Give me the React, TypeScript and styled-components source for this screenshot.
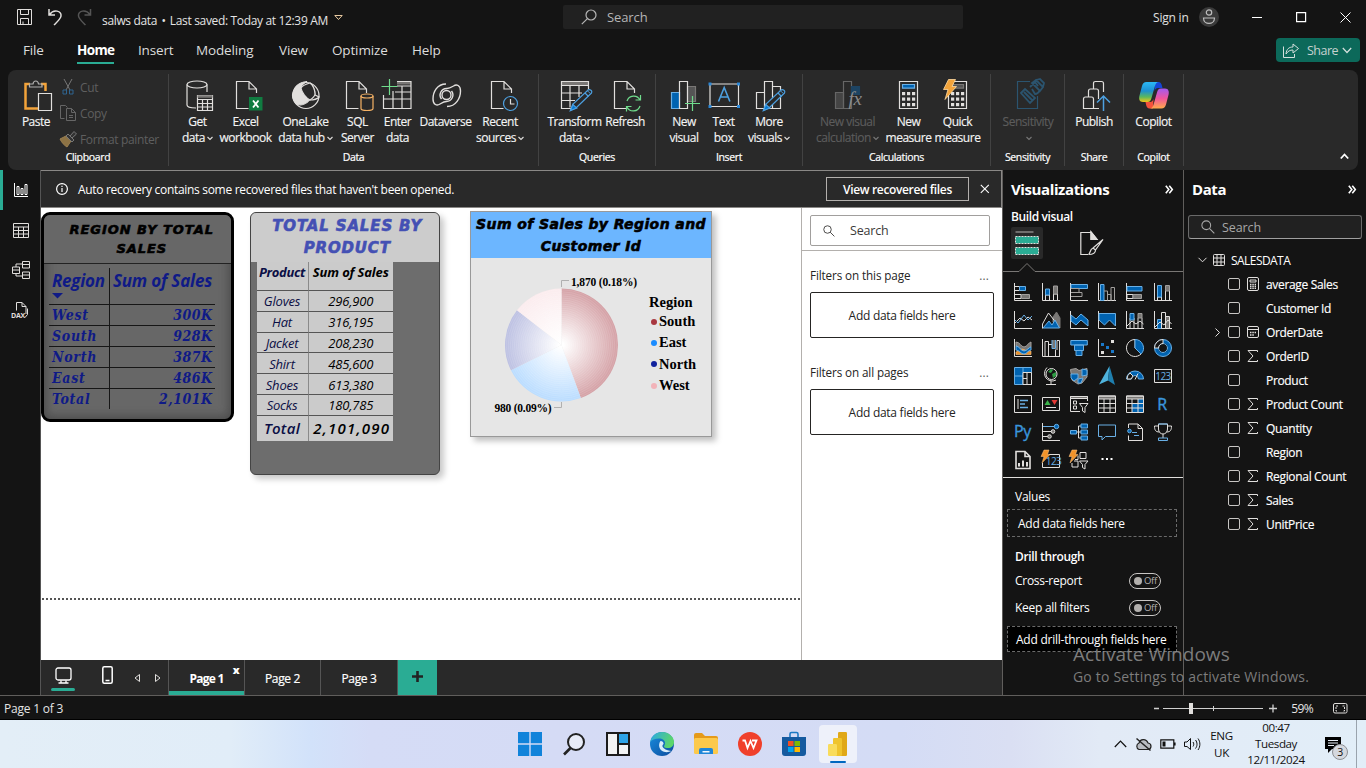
import React from "react";
import styled, { createGlobalStyle, css } from "styled-components";

const UI = `"Open Sans", "Noto Sans", sans-serif`;
const W = "#e1dfdd";
const B = "#0063b1";
const L = "#69afe5";
const G = "#797775";

const Global = createGlobalStyle`
  * { box-sizing: border-box; }
  body { margin: 0; background: #141414; overflow: hidden; font-family: ${UI}; font-size: 12px; letter-spacing: -0.35px; color: #fff; }
  svg { display: block; flex: none; overflow: visible; }
`;

const App_ = styled.div`
  width: 1366px; height: 768px; display: flex; flex-direction: column; background: #141414; position: relative; overflow: hidden;
`;

/* ---------- title bar ---------- */
const TitleBar = styled.header`
  height: 36px; display: flex; align-items: center; padding: 0 0 2px 16px; flex: none;
`;
const QuickIcons = styled.div`display: flex; gap: 13px; width: 86px;`;
const FileTitle = styled.div`
  display: flex; align-items: center; gap: 1.5px; width: 461px; color: #e4e4e4; padding-top: 6px; white-space: pre; letter-spacing: -0.34px;
  svg { margin: -4px 0 0 2px; }
`;
const TopSearch = styled.div`
  width: 400px; height: 24px; background: #212121; border-radius: 2px; display: flex; align-items: center; gap: 10px; padding-left: 18px; color: #b5b5b5; font-size: 13px; letter-spacing: -0.1px;
`;
const SignIn = styled.div`display: flex; align-items: center; gap: 10px; margin-left: 190px; font-size: 12px; color: #e0e0e0; letter-spacing: -0.2px;`;
const WindowButtons = styled.div`display: flex; align-items: center; gap: 33px; margin-left: 33px; padding-top: 1px;`;

/* ---------- menu ---------- */
const MenuBar = styled.nav`height: 34px; display: flex; flex: none; align-items: flex-start; padding-left: 23px;`;
const MenuItem = styled.a<{ $w: number; $on?: boolean }>`
  width: ${(p) => p.$w}px; font-size: 13.5px; line-height: 29px; color: ${(p) => (p.$on ? "#fff" : "#dcdcdc")};
  font-weight: ${(p) => (p.$on ? 700 : 400)}; letter-spacing: ${(p) => (p.$on ? -0.65 : -0.15)}px; display: flex;
  span { border-bottom: 2px solid ${(p) => (p.$on ? "#2aac94" : "transparent")}; height: 28px; }
`;
const ShareButton = styled.button`
  margin-left: auto; margin-top: 2px; margin-right: 6px; width: 84px; height: 24px; border: 0; border-radius: 4px; background: #0c695a;
  color: #c6d2cf; font: 12.5px ${UI}; letter-spacing: -0.5px; display: flex; align-items: center; padding: 0 0 0 7px; gap: 8px;
  svg + span + svg { margin-left: -4px; }
`;

/* ---------- ribbon ---------- */
const Ribbon = styled.section`
  height: 100px; margin: 0 8px; background: #292929; border-radius: 8px; display: flex; flex: none; padding: 4px 0 4px; 
`;
const Group = styled.div<{ $w: number; $pad?: number }>`
  width: ${(p) => p.$w}px; height: 92px; border-right: 1px solid #424242; display: flex; flex-direction: column;
  > div:first-child { padding-left: ${(p) => p.$pad ?? 0}px; }
`;
const GroupBody = styled.div`display: flex; height: 74px;`;
const GroupName = styled.div`text-align: center; font-size: 10.5px; line-height: 18px; color: #fff; letter-spacing: -0.35px; -webkit-text-stroke: 0.2px #fff;`;
const Tool = styled.div<{ $w: number; $off?: boolean }>`
  width: ${(p) => p.$w}px; flex: none; display: flex; flex-direction: column; align-items: center; padding-top: 5px; white-space: nowrap;
  color: ${(p) => (p.$off ? "#5c5c5c" : "#f4f4f4")}; 
  p { margin: 3px 0 0; line-height: 16px; text-align: center; font-size: 12px; letter-spacing: -0.48px; -webkit-text-stroke: 0.15px currentColor; }
  p svg { display: inline-block; margin-left: 2px; vertical-align: 1px; }
`;
const ClipList = styled.div`
  display: flex; flex-direction: column; color: #5f5f5f; font-size: 12px; padding-left: 2px;
  div { display: flex; align-items: center; height: 26px; flex: none; gap: 3px; }
`;
const RibbonEnd = styled.div`flex: 1; display: flex; align-items: flex-end; justify-content: flex-end; padding: 0 9px 6px 0;`;

/* ---------- body ---------- */
const Body = styled.main`height: 525px; display: flex; flex: none;`;
const Rail = styled.aside`width: 41px; border-right: 1px solid #555; display: flex; flex-direction: column;`;
const RailItem = styled.div<{ $on?: boolean }>`
  height: 40px; display: flex; align-items: center; justify-content: center; padding-right: 2px;
  border-left: 3px solid ${(p) => (p.$on ? "#2aac94" : "transparent")};
`;
const Center = styled.section`width: 961px; display: flex; flex-direction: column;`;
const InfoBar = styled.div`
  height: 38px; background: #292929; border: 1px solid #8a8886; border-left: 0; display: flex; align-items: center; padding: 0 11px 0 15px;
  span { margin-left: 10px; font-size: 12px; letter-spacing: -0.31px; }
`;
const InfoButton = styled.button`
  margin-left: auto; width: 143px; height: 24px; background: transparent; border: 1px solid #b3b0ad; color: #fff; font: 600 12px ${UI}; letter-spacing: -0.35px; margin-right: 11px; padding: 0;
`;
const Work = styled.div`height: 452px; display: flex; background: #fff;`;
const Canvas = styled.div`
  width: 760px; position: relative; overflow: hidden;
`;
const PageEdge = styled.div`position: absolute; left: 1px; right: 0; top: 390px; height: 2px; background: repeating-linear-gradient(90deg, #555 0 2px, #fff 2px 4px);`;

const Filters = styled.aside`width: 201px; border-left: 1px solid #b3b0ad; color: #252423; display: flex; flex-direction: column;`;
const FilterSearchRow = styled.div`height: 43px; border-bottom: 1px solid #b3b0ad; padding: 7px 0 0 8px;`;
const FilterSearch = styled.div`
  width: 180px; height: 31px; border: 1px solid #a19f9d; border-radius: 2px; display: flex; align-items: center; padding-left: 12px; gap: 15px; font-size: 12.5px; color: #3b3a39; letter-spacing: -0.2px;
  svg { width: 12px; height: 12px; }
`;
const FilterHead = styled.div`display: flex; justify-content: space-between; padding: 0 13px 0 8px; height: 17px; line-height: 17px; font-size: 11.7px; margin-top: 16px; letter-spacing: -0.12px;`;
const Dots = styled.span`letter-spacing: 0.2px; color: #605e5c;`;
const DropBox = styled.div`
  margin: 8px 0 10px 8px; width: 184px; height: 46px; border: 1px solid #252423; border-radius: 2px; display: flex; align-items: center; justify-content: center; font-size: 12px; letter-spacing: -0.27px;
`;

/* ---------- page tabs ---------- */
const Tabs = styled.div`height: 35px; background: #292929; display: flex;`;
const ViewButton = styled.div<{ $on?: boolean }>`
  width: 44px; display: flex; flex-direction: column; align-items: center; padding-top: 7px; gap: 4px;
  &::after { content: ""; width: 24px; height: 3px; border-radius: 2px; background: ${(p) => (p.$on ? "#2aac94" : "transparent")}; }
  & + & { padding-top: 6px; }
`;
const Arrows = styled.div`width: 39px; display: flex; gap: 15px; padding: 13px 0 0 5px;`;
const Tab = styled.div<{ $on?: boolean; $w?: number }>`
  width: ${(p) => p.$w ?? 76}px; border-left: 1px solid #555; text-align: center; line-height: 38px; height: 35px; font-size: 12px; position: relative; 
  font-weight: ${(p) => (p.$on ? 700 : 400)}; -webkit-text-stroke: ${(p) => (p.$on ? 0 : 0.2)}px #fff;
  ${(p) => p.$on && css`box-shadow: inset 0 -4px #2aac94; letter-spacing: -0.75px;`}
`;
const TabClose = styled.b`position: absolute; right: 5px; top: 0; line-height: 19px; font-size: 11px;`;
const AddTab = styled.div`width: 40px; background: #2aac94; border-left: 1px solid #555; display: flex; align-items: center; justify-content: center; padding-bottom: 2px;`;

/* ---------- visualizations pane ---------- */
const VizPane = styled.aside`width: 182px; border-left: 1px solid #605e5c; border-right: 1px solid #605e5c; display: flex; flex-direction: column;`;
const PaneTitle = styled.div`
  height: 38px; display: flex; align-items: center; justify-content: space-between; padding: 0 10px 0 8px; font-size: 15px; font-weight: 700; letter-spacing: -0.4px;
`;
const BuildLabel = styled.div`height: 19px; padding-left: 8px; line-height: 17px; font-weight: 600; font-size: 12px; letter-spacing: -0.38px;`;
const BuildTabs = styled.div`
  display: flex; height: 32px; padding-left: 8px; gap: 33px;
  div { width: 32px; display: flex; align-items: center; justify-content: center; border-radius: 2px; }
  div:first-child { background: #292929; }
`;
const IconGrid = styled.div`
  display: grid; grid-template-columns: repeat(6, 28px); grid-auto-rows: 28px; padding: 6px 0 0 6px; place-items: center; height: 206px; border-bottom: 1px solid #e1dfdd; margin-top: 1px;
`;
const Notch = styled.div`height: 12px;`;
const WellLabel = styled.div<{ $h: number; $b?: boolean; $drop?: number }>`
  height: ${(p) => p.$h}px; padding: ${(p) => p.$drop ?? 0}px 22px 0 12px; font-size: 12px; font-weight: ${(p) => (p.$b ? 600 : 400)};
  display: flex; align-items: center; justify-content: space-between; letter-spacing: ${(p) => (p.$b ? -0.35 : -0.27)}px;
`;
const Well = styled.div<{ $dark?: boolean; $h: number }>`
  margin: 0 6px 0 4px; height: ${(p) => p.$h}px; border: 1px dashed #6a6a6a; padding-left: ${(p) => (p.$dark ? 8 : 10)}px; display: flex; align-items: center;
  background: ${(p) => (p.$dark ? "#000" : "transparent")}; white-space: nowrap; font-size: 12px; letter-spacing: ${(p) => (p.$dark ? -0.24 : -0.27)}px;
`;
const Toggle = styled.span`
  width: 32px; height: 16px; border: 1px solid #c8c6c4; border-radius: 8px; display: flex; align-items: center; gap: 2px; padding-left: 4px; font-size: 9.5px; color: #b3b0ad; line-height: 14px;
  &::before { content: ""; width: 8px; height: 8px; border-radius: 50%; background: #b3b0ad; }
`;

/* ---------- data pane ---------- */
const DataPane = styled.aside`width: 182px; display: flex; flex-direction: column;`;
const DataSearch = styled.div`
  margin: 7px 4px 9px 4px; height: 24px; border: 1px solid #6a6a6a; border-bottom-color: #a0a0a0; border-radius: 3px; background: #212121; display: flex; align-items: center; padding-left: 12px; gap: 7px; color: #a8a8a8; font-size: 12.5px; letter-spacing: -0.1px;
`;
const TableRow = styled.div`height: 24px; display: flex; align-items: center; padding-left: 14px; gap: 6px; letter-spacing: -0.55px;`;
const FieldRow = styled.div`
  height: 24px; display: flex; align-items: center; font-size: 12px; letter-spacing: -0.33px; -webkit-text-stroke: 0.15px #fff;
  i { width: 44px; display: flex; justify-content: flex-end; padding-right: 8px; }
  em { width: 12px; height: 12px; border: 1px solid #c8c6c4; border-radius: 2px; }
  u { width: 26px; display: flex; justify-content: center; text-decoration: none; }
`;

/* ---------- status bar ---------- */
const Status = styled.footer`
  height: 25px; flex: none; border-top: 1px solid #605e5c; border-bottom: 1px solid #000; display: flex; align-items: center; padding: 1px 18px 0 4px; font-size: 12px; color: #e4e4e4; letter-spacing: -0.2px;
  svg:first-of-type { margin: -1px 0 0 auto; }
  b { font-weight: 400; margin: 0 20px 0 14px; letter-spacing: -0.6px; }
`;

/* ---------- task bar ---------- */
const TaskBar = styled.footer`
  height: 48px; flex: none; display: flex; background: linear-gradient(90deg, #e3eef7 0, #e1edf8 230px, #d2e2fa 310px, #d5dcf6 370px, #d5dbf5 560px, #d4dcf5 900px, #dadff3 1010px, #e2eaf6 1100px, #e2eef8 100%);
  color: #111; 
`;
const Apps = styled.div`display: flex; margin-left: 507.5px; width: 352px; align-items: center;`;
const AppSlot = styled.div<{ $on?: boolean }>`
  width: 44px; height: 48px; display: flex; align-items: center; justify-content: center; position: relative;
  > div { width: 38px; height: 38px; display: flex; align-items: center; justify-content: center; border-radius: 4px; background: ${(p) => (p.$on ? "#eef1fa" : "transparent")}; }
  &::after { content: ""; position: absolute; bottom: 5px; width: 16px; height: 2.5px; border-radius: 2px; background: ${(p) => (p.$on ? "#0067c0" : "transparent")}; }
`;
const Tray = styled.div`margin-left: 254px; display: flex; align-items: center; gap: 8px;`;
const TrayText = styled.div<{ $w: number; $lh: number }>`
  width: ${(p) => p.$w}px; text-align: center; line-height: ${(p) => p.$lh}px; font-size: 11.6px; letter-spacing: -0.4px; align-self: center;
`;
const Notice = styled.div`position: relative; align-self: center; width: 28px; margin: 1px 0 0 12.5px; padding-left: 3px;`;
const Badge = styled.span`
  position: absolute; left: 10px; top: 7px; width: 16px; height: 16px; border-radius: 50%; background: #d5d8de; border: 1px solid #8d8f94; font-size: 10.5px; line-height: 14px; text-align: center;
`;
const ShowDesktop = styled.div`margin-left: 6px; width: 5px; height: 48px; border-left: 1px solid #9aa3ad; align-self: flex-start;`;
const Watermark = styled.div`
  position: absolute; left: 1073px; top: 642px; color: rgba(160, 160, 160, 0.75); font-size: 19px; line-height: 24px; letter-spacing: 0.05px; pointer-events: none; white-space: nowrap;
  small { display: block; font-size: 14px; line-height: 21px; letter-spacing: 0.19px; }
`;

/* ---------- report visuals ---------- */
const Visual = styled.article<{ $x: number; $y: number; $w: number; $h: number }>`
  position: absolute; left: ${(p) => p.$x}px; top: ${(p) => p.$y}px; width: ${(p) => p.$w}px; height: ${(p) => p.$h}px; overflow: hidden;
`;
const RegionCard = styled(Visual)`
  border: 3px solid #000; border-radius: 9px; background: #676767; box-shadow: inset 0 0 9px 3px #4d4d4d;
`;
const CardTitle = styled.h3<{ $size: number; $lh: number; $sp: number }>`
  margin: 0; text-align: center; font-family: "DejaVu Sans", sans-serif; font-weight: 700; font-style: italic; -webkit-text-stroke: 0.6px currentColor;
  font-size: ${(p) => p.$size}px; line-height: ${(p) => p.$lh}px; letter-spacing: ${(p) => p.$sp}px; white-space: pre;
`;
const RegionTitle = styled(CardTitle)`color: #000; height: 50px; padding: 6px 0 0 9px; border-bottom: 1px solid #222; background: #676767; margin: -1px 0 0;`;
const RegionTable = styled.div`
  margin: 4px 0 0 5px; width: 166px; display: grid; grid-template-columns: 61px 105px; grid-template-rows: 37px repeat(5, 20.9px); color: #0f1a86;
`;
const RCell = styled.div<{ $r?: boolean; $head?: boolean; $last?: boolean }>`
  border-bottom: ${(p) => (p.$last ? 0 : 1)}px solid #161616; border-right: ${(p) => (p.$r ? 0 : 1)}px solid #161616;
  text-align: ${(p) => (p.$r ? "right" : "left")}; padding: ${(p) => (p.$r ? "0 2.5px 0 0" : "0 0 0 3px")}; white-space: nowrap;
  font: italic bold 14px/20px "DejaVu Serif Condensed", "DejaVu Serif", serif; letter-spacing: ${(p) => (p.$r ? 0.5 : 0.7)}px;
  ${(p) => p.$head && css`font-family: ${UI}; font-size: 17px; line-height: 25px; letter-spacing: ${p.$r ? -0.2 : -0.25}px; padding-right: ${p.$r ? 3 : 0}px;`}
`;
const ProductCard = styled(Visual)`
  border: 1px solid #444; border-radius: 6px; background: #6d6d6d; box-shadow: 4px 4px 6px rgba(0, 0, 0, 0.22);
`;
const ProductTitle = styled(CardTitle)`color: #4450b4; background: #ccc; height: 49px; padding: 2px 0 0 5px;`;
const ProductTable = styled.div`
  margin-left: 5.500px; width: 136.500px; background: #cbcbcb; display: grid; grid-template-columns: 52px 84.500px; grid-template-rows: 29px repeat(6, 20.8px) 25px; font-style: italic;
`;
const PCell = styled.div<{ $k?: "head" | "total"; $n?: boolean }>`
  border-bottom: ${(p) => (p.$k === "total" ? 0 : 1)}px solid #555; border-right: ${(p) => (p.$n ? 0 : 1)}px solid #8a8a8a;
  display: flex; align-items: center; justify-content: center; color: ${(p) => (p.$n ? "#000" : "#0b0f45")}; font-size: 13px; white-space: nowrap; letter-spacing: -0.2px; padding-top: 1px;
  ${(p) => p.$k === "head" && css`font-weight: 700; font-size: 13px; padding: 0 0 8px; letter-spacing: ${p.$n ? -0.15 : -0.3}px;`}
  ${(p) => p.$k === "total" && css`font-weight: 600; font-size: 15px; letter-spacing: ${p.$n ? 1.25 : 0.3}px; padding: 0 0 1px ${p.$n ? 2 : 0}px;`}
`;
const PieCard = styled(Visual)`border: 1px solid #999; background: #e6e6e6; box-shadow: 4px 4px 6px rgba(0, 0, 0, 0.25);`;
const PieTitle = styled(CardTitle)`color: #000; background: #6cb6ff; height: 46px; padding-top: 1px;`;
const PieBody = styled.div`display: flex; color: #000;`;
const Legend = styled.ul`
  margin: 34px 0 0; padding: 0; list-style: none; font: bold 14.5px/21.3px "Liberation Serif", serif; letter-spacing: 0;
  li { display: flex; align-items: center; gap: 2px; padding-left: 2px; }
  li:first-child { padding-left: 0; line-height: 24px; height: 19px; }
`;
const Dot = styled.span<{ $c: string }>`width: 6px; height: 6px; border-radius: 50%; background: ${(p) => p.$c};`;

/* ---------- icons ---------- */
type K = { children?: React.ReactNode };
const Svg = ({ w, h, children, s = W, sw = 1 }: K & { w: number; h: number; s?: string; sw?: number }) => (
  <svg width={w} height={h} viewBox={`0 0 ${w} ${h}`} fill="none" stroke={s} strokeWidth={sw}>{children}</svg>
);
const Big = ({ children, s }: K & { s?: string }) => <Svg w={30} h={32} s={s ?? W} sw={1.2}>{children}</Svg>;
const Caret = ({ s = "#e1dfdd" }) => <Svg w={6} h={5} s={s} sw={1.1}><path d="M.5 1l2.5 2.5L5.5 1" /></Svg>;
const Lens = ({ n = 16, s = "#b5b5b5" }) => (
  <svg width={n} height={n} viewBox="0 0 16 16" fill="none" stroke={s} strokeWidth="1.2"><circle cx="10" cy="6" r="5" /><path d="M6.4 9.6L.8 15.2" /></svg>
);
const LensR = ({ n = 13, s = "#3b3a39" }) => (
  <svg width={n} height={n} viewBox="0 0 16 16" fill="none" stroke={s} strokeWidth="1.2"><circle cx="6" cy="6" r="5" /><path d="M9.6 9.6L15.2 15.2" /></svg>
);
const doc = (x: number) => <path d={`M${x + 12.5} 29.5H${x + .5}V2.5H${x + 13}L${x + 20.5} 10V14M${x + 13} 2.5V10H${x + 20.5}`} />;
const pencil = (x: number) => (
  <g stroke="#4da0e0" fill="#292929"><path d={`M${x + 17} 11.500l3.500 3L${x + 6} 28.500l-6 3 2.500-6.500z`} /><path d={`M${x + 14.5} 14l3.500 3.500M${x + 17} 11.500c2-2.300 6 .5 3.500 3`} /><path d={`M${x} 31.500l2.300-6 4 3.500z`} fill="#0078d4" /></g>
);
const calc = (x: number, hi: string) => (
  <g><path d={`M${x + .5} 2.5h18v27h-18z`} /><path d={`M${x + 3.5} 5.5h12v3.6h-12z`} fill={hi} stroke={hi === B ? L : G} />
    {[13, 18.5, 24].map((y) => [3, 8, 13].map((q) => <rect key={q + "-" + y} x={x + q} y={y} width="3.2" height="3.2" fill={W} stroke="none" />))}</g>
);
const cyl = (x: number, y: number, w: number, h: number) => (
  <g><ellipse cx={x + w / 2} cy={y + 2} rx={w / 2} ry="2" /><path d={`M${x} ${y + 2}V${y + h - 2}a${w / 2} 2 0 0 0 ${w} 0V${y + 2}`} /></g>
);
const BoltBig = () => <path d="M5.5.5h7l-3.500 7h4.500L2 20.500l3-10H.5z" fill="#f2a33a" stroke="#ffd9a0" strokeWidth=".8" />;

const viz: React.ReactNode[] = [
  <><path d="M.5 0v17.500H18M1 3.500h4.500v4H1M1 11.500h6v4H1" /><path d="M5.500 3.500h6v4h-6z" fill={B} stroke={L} /><path d="M7.500 11.500h8v4h-8z" fill={G} stroke="#a19f9d" /></>,
  <><path d="M.5 0v17.500H18M3.500 17v-5h4v5M11.500 17v-6h4v6" /><path d="M3.500 6h4v6h-4z" fill={B} stroke={L} /><path d="M11.500 3h4v8h-4z" fill={G} stroke="#a19f9d" /></>,
  <><path d="M.5 0v17.500H18" /><path d="M1 1.500h16.500v4H1z" fill={B} stroke={L} /><path d="M1 5.500h8v4H1M1 9.500h11v4H1M1 13.500h7" stroke="#a19f9d" /></>,
  <><path d="M.5 0v17.500H18" /><path d="M2.500 1.500h3.500v16H2.500z" fill={B} stroke={L} /><path d="M6 8h3.500v9.500M9.500 11.500H13v6M13 17.500V4.500h3.500v13" stroke="#a19f9d" /></>,
  <><path d="M.5 0v17.500H18" /><path d="M1 3.500h15v4.500H1z" fill={B} stroke={L} /><path d="M1 11.500h6v4H1z" /><path d="M7 11.500h8.500v4H7z" fill={G} stroke="#a19f9d" /></>,
  <><path d="M.5 0v17.500H18M3.500 14h4v3.500M3.500 14v3.500M11.500 8v9.500M15.500 8v9.500" /><path d="M3.500 2.500h4V14h-4z" fill={B} stroke={L} /><path d="M11.500 2.500h4V8h-4z" fill={G} stroke="#a19f9d" /></>,
  <><path d="M.5 0v17.500H18M1 12l5-5 4 3 4-4 4 3" /><path d="M1 9l3 3 6-8 4 5 4-4" stroke={L} /></>,
  <><path d="M11 6l3.500-5L18 7v10l-7-6z" fill={G} stroke={G} /><path d="M.5 13L6.500 2l7 9M.5 13v4.500" /><path d="M1 17L7 10l3 4 3-5 4.500 8z" fill={B} stroke={L} /></>,
  <><path d="M.5 0v17.500H18" /><path d="M1 4l5 4 5-5 7 6v6l-7-6-5 5-5-4z" fill={B} stroke={L} /></>,
  <><path d="M.5 0v17.500H18" /><path d="M1 2.500h16.500V15l-6-6-5 5L1 9z" fill={B} stroke={L} /></>,
  <><path d="M.5 0v17.500H18M4 7v10M8 7v10M12 7v10M16 7v10" /><path d="M4 2.500h4V9H4z" fill={B} stroke={L} /><path d="M12 2.500h4V7h-4z" fill={G} stroke="#a19f9d" /><path d="M1 15l5-5 4 3 4-3 3.500 3" /></>,
  <><path d="M.5 0v17.500H18" /><path d="M3.500 8.500h4v9h-4z" fill={B} stroke={L} /><path d="M7.500 1.500h4v16h-4z" /><path d="M11.500 5.500h4v12h-4z" fill={G} /><path d="M1 16l5-5 4 3 4-5 3.500 4" /></>,
  <><path d="M2 3c4 0 5 5 8 5s5-5 7-5v5c-2 0-4 4-7 4S5 7 2 7z" fill={G} stroke="#a19f9d" /><path d="M2 13c3-1 4-3 6-3s5 3 9 2v3.500H2z" fill="#e8912d" stroke="#ffc98a" strokeWidth=".6" /><path d="M2 7c3 0 5 5 8 5s5-4 7-4v3c-3 0-4 4-7 4S5 11 2 11z" fill={B} stroke={L} /><path d="M.5 0v17.500H18" /></>,
  <><path d="M.5 0v17.500H18M3 17.500V2.500h3.500v15M6.500 5.500H10M15 11V1.500h2.500v16M13.500 17.500v-7" /><path d="M10 1v8.500h3.500V1" fill={G} stroke={L} /></>,
  <><path d="M.8 1.500h16.500v4.500H.8zM4.500 6h9v5.500h-9zM6 11.500h6v5H6z" fill={B} stroke={L} /></>,
  <><path d="M.5 0v17.500H18" /><g stroke="none"><path d="M13 1h3v3h-3zM3 12h3v3H3z" fill={W} /><path d="M3 4h3v3H3zM8 7h3v3H8zM13 11h3v3h-3z" fill="#1a78c8" /></g></>,
  <><path d="M9 .5v8.500l6 6A8.500 8.500 0 1 1 9 .5z" /><path d="M9 .5a8.500 8.500 0 0 1 6 14.500L9 9z" fill={B} stroke={L} /></>,
  <><circle cx="9" cy="9" r="6.700" stroke={B} strokeWidth="3.500" /><circle cx="9" cy="9" r="8.500" stroke={L} /><circle cx="9" cy="9" r="4.500" stroke={L} /><path d="M9 .5v4A4.500 4.500 0 0 0 4.500 9h-4A8.500 8.500 0 0 1 9 .5z" fill="#141414" /></>,
  <><path d="M.5.5h17v17H.5z" fill={B} stroke={L} /><path d="M9 .5v17M.5 9H9" stroke={L} /><path d="M9 5.500h8.500v12H9zM13 5.500v12M9 11.500h4" fill="#141414" /></>,
  <><circle cx="9.500" cy="7" r="5.500" /><path d="M6 5l3-3 2 1-2 3zM10 7l4-2v4l-3 2z" fill="#2e9e44" stroke="none" /><path d="M5 .5C.5 5 2 14 11 14l3-1M9 14v3.500M4 17.500h10" /></>,
  <><path d="M.5 2.500L6 1.500l3 2 8-2V10l-5 6-4 1-6-4z" fill={G} stroke="#a19f9d" /><path d="M1 7h7v4l-4 3-3-3zM12 2l5 1v5l-5 1zM8 12l5-1-2 5-3 0z" fill={B} stroke={L} /></>,
  <><path d="M11.500-1L1 17.500l9-4z" fill="#4fb3dc" stroke="none" /><path d="M11.500-1L10 13.500l7 4.500z" fill="#1f7fae" stroke="none" /></>,
  <><path d="M.5 12a8.500 8 0 0 1 17 0h-5a3.500 3.500 0 0 0-7 0z" fill={B} stroke={L} /><path d="M1 12a8 8 0 0 1 3-6l3 3-2 3z" fill="#141414" /><path d="M9 12.500l3-6" /></>,
  <><path d="M.5 2.500h17v13H.5z" /><text x="9" y="12.500" fontSize="10" textAnchor="middle" fill={L} stroke="none" fontFamily="Open Sans" letterSpacing="-.5">123</text></>,
  <><path d="M.5.500h17v17H.5zM4 4v10" /><path d="M6 5.500h8M6 9h5M6 12.500h8" stroke={L} strokeWidth="1.500" /></>,
  <><path d="M.5 2.500h17v13H.5zM4 12.500h10" /><path d="M2.500 10l3-5 3 5z" fill="#3bb44a" stroke="none" /><path d="M9.500 5h6l-3 5z" fill="#e53935" stroke="none" /></>,
  <><path d="M17.500 6V1.500H.5v15H10M3.500 6h3v3h-3zM3.500 11h3v3h-3z" /><path d="M.5 1.500h17v2H.5z" fill={G} /><path d="M9.500 8.500h8.500l-3 4v5l-2.500-1.500v-3.500z" fill="#141414" /></>,
  <><path d="M.5 1h17v3H.5z" fill={G} /><path d="M.5 1h17v16.500H.5zM.5 8.500h17M.5 13h17M6 4v13.500M12 4v13.500" /></>,
  <><path d="M6 8.500h11.500v9H6z" fill={B} stroke="none" /><path d="M12 4h5.500v5H12z" fill={B} stroke="none" /><path d="M.5 1h17v3H.5z" fill={G} /><path d="M.5 1h17v16.500H.5zM.5 8.500h17M.5 13h17M6 4v13.500M12 4v13.500" /></>,
  <text x="8" y="15" fontSize="16" textAnchor="middle" fill="#3a96dd" stroke="#3a96dd" strokeWidth=".4" fontFamily="Open Sans">R</text>,
  <text x="8.500" y="14" fontSize="16" textAnchor="middle" fill="#3a96dd" stroke="#3a96dd" strokeWidth=".4" fontFamily="Open Sans">Py</text>,
  <><path d="M.5 0v17.500H18M1 8.500h9M1 13.500h5" /><path d="M1 3.500h14" stroke={L} /><circle cx="14.500" cy="3.500" r="2.200" fill={B} stroke={L} /><circle cx="11" cy="8.500" r="1.800" fill={G} /><circle cx="7.500" cy="13.500" r="1.800" fill={G} /></>,
  <><path d="M6 9h5M8.500 9V3H11M8.500 9v6H11" /><path d="M.5 7.500h6v3.500h-6zM11 1h6.500v4H11zM11 7h6.500v4H11zM11 13h6.500v4H11z" fill={B} stroke={L} /></>,
  <path d="M.5 2h17v11.500H7.500L4 17v-3.500H.5z" stroke={L} />,
  <><path d="M2.500 5V1H12l4.500 4.500v12h-14v-5M12 1v4.500h4.500" /><path d="M6 9.500h5M8 12.500h5" stroke={L} /><circle cx="3.500" cy="8" r="1.800" fill={B} stroke={L} /></>,
  <><path d="M4.500 1h9v5c0 3-2 5-4.500 5S4.500 9 4.500 6zM4.500 3h-4c0 4 1 6 5 6M13.500 3h4c0 4-1 6-5 6M9 11v4" /><path d="M4.500 15h9v2.500h-9zM4.500 1h9" stroke={L} /></>,
  <><path d="M2 .5h9l5 5v12H2zM11 .5v5h5" strokeWidth="1.600" /><path d="M5 12v3.500M9 9.500v6M13 11v4.500" strokeWidth="2" /></>,
  <><path d="M7 3.500h10.500v13H.5V12" /><text x="11.500" y="13.500" fontSize="10" textAnchor="middle" fill={L} stroke="none" fontFamily="Open Sans" letterSpacing="-.6">123</text><path d="M2-1h5L5.500 3.500H8L0 12l2-6.500H-1z" fill="#f2932a" stroke="#ffc98a" strokeWidth=".5" /></>,
  <><path d="M10 1.500h6v6h-6zM2 12v4h6v-6H4M8 4.500v4H5" /><path d="M9.500 10h8.500l-3 3.500V18l-2.500-1.500v-3z" fill="#141414" /><path d="M2-1h5L5.500 3.500H8L0 12l2-6.500H-1z" fill="#f2932a" stroke="#ffc98a" strokeWidth=".5" /></>,
  <path d="M3.500 8h2M8 8h2M12.500 8h2" strokeWidth="2" stroke="#fff" />,
];

const sigma = <Svg w={12} h={12}><path d="M10.500 2V.500H1L6 6 1 11.500h9.500V10" /></Svg>;
const calcIcon = <Svg w={12} h={14}><rect x=".5" y=".5" width="11" height="13" rx="1.500" /><path d="M3 3h6v2H3z" /><path d="M3 7.500h6M3 9.500h6M3 11.300h6" strokeDasharray="1.500 .8" strokeWidth="1.300" /></Svg>;
const dateIcon = <Svg w={12} h={12}><rect x=".5" y=".5" width="11" height="11" rx="1.500" /><path d="M.5 3.500h11" /><path d="M3 6.500h6M3 9h4" strokeDasharray="1.500 .8" strokeWidth="1.300" /></Svg>;
const fields: [string, React.ReactNode, boolean?][] = [
  ["average Sales", calcIcon], ["Customer Id", null], ["OrderDate", dateIcon, true], ["OrderID", sigma], ["Product", null],
  ["Product Count", sigma], ["Quantity", sigma], ["Region", null], ["Regional Count", sigma], ["Sales", sigma], ["UnitPrice", sigma],
];
const regions = [["West", "300K"], ["South", "928K"], ["North", "387K"], ["East", "486K"], ["Total", "2,101K"]];
const products = [["Gloves", "296,900"], ["Hat", "316,195"], ["Jacket", "208,230"], ["Shirt", "485,600"], ["Shoes", "613,380"], ["Socks", "180,785"]];

const PCX = 90.5, PCY = 87, PR = 56.5;
const slice = (a: number, b: number) => {
  const p = (d: number) => [PCX + PR * Math.sin((d * Math.PI) / 180), PCY - PR * Math.cos((d * Math.PI) / 180)].map((v) => v.toFixed(2)).join(" ");
  return `M${PCX} ${PCY}L${p(a)}A${PR} ${PR} 0 0 1 ${p(b)}Z`;
};
const slices: [number, number, string, string][] = [
  [0, 160, "#d4a0a5", "south"], [160, 243.4, "#b9dcff", "east"], [243.4, 308, "#bcc0e2", "north"], [308, 360, "#fbecee", "west"],
];

const DoubleChevron = () => <Svg w={8} h={9} s="#fff" sw={1.6}><path d="M.8.8l3 3.700-3 3.700M4.300.8l3 3.700-3 3.700" /></Svg>;

export default function App() {
  return (
    <App_>
      <Global />
      <TitleBar>
        <QuickIcons>
          <Svg w={17} h={16}><path d="M1.500.5h14v15h-14zM4.500.5v5h8v-5M4.500 15.500V9.500h8v6M7 12.500v3" /></Svg>
          <Svg w={17} h={16} sw={1.5}><path d="M3 0v6h6M3.500 5.500C8-.5 15.500 2 15 7c-.3 3-4 6-7 9" /></Svg>
          <Svg w={17} h={16} s="#555" sw={1.5}><path d="M14.500 0v6h-6M14 5.500C9.500-.5 2 2 2.500 7c.3 3 4 6 7 9" /></Svg>
        </QuickIcons>
        <FileTitle>salws data <span>•</span> Last saved: Today at 12:39 AM <Svg w={9} h={10}><path d="M.8 2.500h7.400L4.500 6.500z" stroke="#e8c9a0" /></Svg></FileTitle>
        <TopSearch><Lens />Search</TopSearch>
        <SignIn>Sign in
          <Svg w={20} h={20} s="#bdbdbd" sw={1.2}><circle cx="10" cy="10" r="10" fill="#3a3a3a" stroke="none" /><circle cx="10" cy="5.500" r="2.700" /><path d="M4.500 11h11c0 7.300-11 7.300-11 0z" /></Svg>
        </SignIn>
        <WindowButtons>
          <Svg w={11} h={11} s="#fff"><path d="M0 5.500h10" /></Svg>
          <Svg w={11} h={11} s="#fff" sw={1.2}><path d="M.6.600h9v9h-9z" /></Svg>
          <Svg w={11} h={11} s="#fff"><path d="M.5.500l10 10M10.500.500l-10 10" /></Svg>
        </WindowButtons>
      </TitleBar>
      <MenuBar>
        {([["File", 54], ["Home", 61], ["Insert", 58], ["Modeling", 83], ["View", 53], ["Optimize", 80], ["Help", 60]] as [string, number][]).map(([t, w]) => (
          <MenuItem key={t} $w={w} $on={t === "Home"}><span>{t}</span></MenuItem>
        ))}
        <ShareButton>
          <Svg w={16} h={15} s="#d5e0dd"><path d="M.5 3.500v11h11V11M3 11c.5-5 3-7 7-7V1l5.500 4.500L10 10V7C7 7 5 8 3 11z" /></Svg>
          <span>Share</span>
          <Svg w={10} h={7} s="#d5e0dd" sw={1.2}><path d="M.8 1l4.200 4.500L9.200 1" /></Svg>
        </ShareButton>
      </MenuBar>
      <Ribbon>
        <Group $w={161} $pad={6}>
          <GroupBody>
            <Tool $w={44}>
              <Big><path d="M9 5H4.500v24.500H17" stroke="#f2a33a" strokeWidth="2.500" /><path d="M20 5h4.500v7" stroke="#f2a33a" strokeWidth="2.500" /><path d="M8.500 8V5h3.500c.5-4 5-4 5.500 0h3.500v3z" stroke="#b0b0b0" /><path d="M17.500 14.500h13v17h-13z" fill="#292929" /></Big>
              <p>Paste</p>
            </Tool>
            <ClipList>
              <div><Svg w={17} h={16} s="#777"><path d="M4 0l6 11M12 0L6 11" /><path d="M3 11h3.500v4H3zM9.500 11H13v4H9.500z" stroke="#2f6591" /></Svg>Cut</div>
              <div><Svg w={17} h={16} s="#666"><path d="M4.500 13.500H.5V.5h5l2 2M6.500 3.500h5l4 4v8h-9zM11.500 3.500v4h4M9 10.500h4M9 12.500h4" /></Svg>Copy</div>
              <div><Svg w={17} h={16} s="#777"><path d="M0 8l6-3 5 5-4 6C4 14 2 12 0 8z" fill="#8d7345" stroke="#9b8051" /><path d="M6 5l2-2 6 6-2 2zM10 5l4-4.500L16.500 3 12 7" fill="#333" /></Svg>Format painter</div>
            </ClipList>
          </GroupBody>
          <GroupName>Clipboard</GroupName>
        </Group>
        <Group $w={370} $pad={7}>
          <GroupBody>
            <Tool $w={43}><Big><ellipse cx="14" cy="5.500" rx="10" ry="3.500" /><path d="M4 5.500V26c0 2 4 3 9 3M24 5.500V13" /><path d="M14.500 16.500h15v15h-15z" fill="#292929" /><path d="M14.500 17.500h15" strokeWidth="2.500" stroke={G} /><path d="M14.500 20.500h15M14.500 24.500h15M14.500 28h15M19.500 20v11M24.500 20v11" /></Big><p>Get<br />data<Caret /></p></Tool>
            <Tool $w={53}><Big>{doc(5)}<rect x="18" y="18" width="13.500" height="13.500" fill="#107c41" stroke="none" /><path d="M22 21.500l5.500 7M27.500 21.500l-5.500 7" stroke="#fff" strokeWidth="1.800" /></Big><p>Excel<br />workbook</p></Tool>
            <Tool $w={67}><Big><circle cx="15" cy="16.500" r="13" /><path d="M16 2.500C8 3 2.500 8 1.500 16c0 4 2 7 4 9 5 2 10 0 13-4C14 17 10 12 10 7c2-2 4-3.500 6-4.500z" fill={W} /><path d="M10 7c0 6 4 12 9 14M19 4c3 3 5 7 5 12l4 2c-3 3-6 3-9 3" /><path d="M19 4c-4 1-7 2-9 5 1 5 5 10 9 12 3-2 5-4 5-6 0-4-2-9-5-11z" fill="#292929" /></Big><p>OneLake<br />data hub<Caret /></p></Tool>
            <Tool $w={37}><Big>{doc(3)}<g stroke="#f5b265">{cyl(18, 15, 12, 16.5)}</g></Big><p>SQL<br />Server</p></Tool>
            <Tool $w={43}><Big><path d="M14 4h14" strokeWidth="3" stroke={G} /><path d="M14 2.500h14v27H.5V16M14 7h14M12 13h16M.5 20h27.500M10 12v17.500M19 7v22.500" /><path d="M6.500 0v16M-1.500 7.500h16" stroke="#6fdc8c" /></Big><p>Enter<br />data</p></Tool>
            <Tool $w={53}><Big><g strokeWidth="1.400"><circle cx="15.500" cy="16" r="4.500" /><path d="M15 5C6 5 2 13 2 20c0 6 4 7 7 5 2.500-1.500 4-2.500 6.500-2.500a6.500 6.500 0 0 0 5-10.500" /><path d="M16 27.500C25 27.500 29.500 19 29.500 12c0-6-4-7-7-5-2.500 1.500-4 2.500-6.500 2.500a6.500 6.500 0 0 0-5.500 10.500" /></g></Big><p>Dataverse</p></Tool>
            <Tool $w={56}><Big>{doc(6)}<circle cx="25.500" cy="24.500" r="7" stroke="#4da0e0" fill="#292929" /><path d="M25.500 20v5h4" /></Big><p>Recent<br />sources<Caret /></p></Tool>
          </GroupBody>
          <GroupName>Data</GroupName>
        </Group>
        <Group $w={117} $pad={7}>
          <GroupBody>
            <Tool $w={57}><Big><path d="M1.500 4.500h27" strokeWidth="3" stroke={G} /><path d="M12 29.500H1.500v-27h27v8M1.500 6.500h27M1.500 14H22M1.500 21.500H15M10 6.500v22M19 6.500V18" /><g>{pencil(10.5)}</g></Big><p>Transform<br />data<Caret /></p></Tool>
            <Tool $w={44}><Big>{doc(4)}<path d="M17 22a7 7 0 0 1 13-1M30.500 16v5h-5M30 27a7 7 0 0 1-13 1M16.500 32.500v-5h5" stroke="#6fdc8c" /></Big><p>Refresh</p></Tool>
          </GroupBody>
          <GroupName>Queries</GroupName>
        </Group>
        <Group $w={147} $pad={8}>
          <GroupBody>
            <Tool $w={40}><Big><path d="M2.500 13.500h8v16h-8z" fill={B} stroke={L} /><path d="M18.500 7.500h8v15h-8z" fill="#555" stroke={G} /><path d="M10.500 2.500h8v27h-8z" /><path d="M23.500 17v15M16 24.500h15" stroke="#6fdc8c" /></Big><p>New<br />visual</p></Tool>
            <Tool $w={39}><Big><path d="M1 5h28.500v22.500H1z" /><g fill="#2b88d8" stroke="none"><path d="M-.5 3.500h3v3h-3zM28 3.500h3v3h-3zM-.5 26h3v3h-3zM28 26h3v3h-3z" /></g><path d="M9.500 22.500l5.700-14 5.700 14M11.500 18h7.500" stroke="#4da0e0" strokeWidth="1.600" /></Big><p>Text<br />box</p></Tool>
            <Tool $w={52}><Big><path d="M2.500 13.500h8v16h-8zM10.500 2.500h8v27h-8zM18.500 7.500h8v22h-8z" />{pencil(9.5)}</Big><p>More<br />visuals<Caret /></p></Tool>
          </GroupBody>
          <GroupName>Insert</GroupName>
        </Group>
        <Group $w={188} $pad={7}>
          <GroupBody>
            <Tool $w={75} $off><Big s="#666"><path d="M2.500 13.500h8v16h-8z" fill="#444" /><path d="M10.500 2.500h8v27h-8z" /><path d="M18.500 7.500h8v8h-8z" fill="#1d4463" stroke="#1d4463" /><text x="15.500" y="26" fontSize="19" fontStyle="italic" fontFamily="Liberation Serif" fill="#8a8a8a" stroke="none">fx</text></Big><p>New visual<br />calculation<Caret s="#777" /></p></Tool>
            <Tool $w={47}><Big>{calc(5, B)}</Big><p>New<br />measure</p></Tool>
            <Tool $w={51}><Big>{calc(5, "#555")}<BoltBig /></Big><p>Quick<br />measure</p></Tool>
          </GroupBody>
          <GroupName>Calculations</GroupName>
        </Group>
        <Group $w={74}>
          <GroupBody>
            <Tool $w={74} $off><Big s="#2b546f"><path d="M17 2.500H4.500v27h20V17" /><path d="M8 14l4-4 10 9-5 5zM11 13l8 8M17 8l5-5 3 4M19 10l3 5c3 0 4-2 5-4M23 1l7 7-3 4-8-8zM23 1l4-1 4 4-1 4" strokeWidth="1.800" /></Big><p>Sensitivity<br /><Caret s="#777" /></p></Tool>
          </GroupBody>
          <GroupName>Sensitivity</GroupName>
        </Group>
        <Group $w={59}>
          <GroupBody>
            <Tool $w={58}><Big><path d="M20 29.500H4.500V20q0-2 2-2h6q2 0 2 2v9.500M9.500 18v-6q0-2 2-2h6q2 0 2 2v8M14.500 10V4.500q0-2 2-2h6q2 0 2 2V13" /><path d="M24.500 32V17M18 23.500l6.500-6.500 6.500 6.500" stroke="#4da0e0" strokeWidth="1.500" /></Big><p>Publish</p></Tool>
          </GroupBody>
          <GroupName>Share</GroupName>
        </Group>
        <Group $w={60}>
          <GroupBody>
            <Tool $w={59}>
              <Big>
                <defs>
                  <linearGradient id="cpA" x1="0" y1="0" x2="0" y2="1"><stop offset="0" stopColor="#2bb8f5" /><stop offset=".45" stopColor="#1d8fd0" /><stop offset=".75" stopColor="#5cb85c" /><stop offset="1" stopColor="#f5c518" /></linearGradient>
                  <linearGradient id="cpB" x1="0" y1="0" x2="0" y2="1"><stop offset="0" stopColor="#a259f0" /><stop offset=".5" stopColor="#f0559b" /><stop offset="1" stopColor="#ffab4a" /></linearGradient>
                </defs>
                <g stroke="none">
                  <path d="M16 3h3.500c2 0 2.800 1.500 3.300 3.300L23.500 9H19c-2 0-3 1.500-3.500 3z" fill="#1546d6" />
                  <path d="M14 29.500h-3.500c-2 0-2.800-1.500-3.300-3.300L6.500 23H11c2 0 3-1.500 3.500-3z" fill="#f4523c" />
                  <path d="M7.500 3H20c-2.500 0-3.500 2-4.200 4.500L12.500 19c-.8 2.700-1.500 4-4 4H4C.5 23-.3 20 .4 17L3 7C3.800 4.500 5 3 7.500 3z" fill="url(#cpA)" />
                  <path d="M22.500 29.500H10.500c2.500 0 3.500-2 4.200-4.500L18 13.500c.8-2.700 1.500-4 4-4h4c3.500 0 4.300 3 3.600 6l-2.600 10c-.8 2.500-2 4-4.500 4z" fill="url(#cpB)" />
                </g>
              </Big>
              <p>Copilot</p>
            </Tool>
          </GroupBody>
          <GroupName>Copilot</GroupName>
        </Group>
        <RibbonEnd><Svg w={9} h={7} s="#fff" sw={1.8}><path d="M.8 5.500l3.700-4 3.700 4" /></Svg></RibbonEnd>
      </Ribbon>

      <Body>
        <Rail>
          <RailItem $on><Svg w={14} h={14} s="#fff"><path d="M.5 0v13.500H14M3 3.500h2v8H3zM7 5.500h2v6H7zM11 1.500h2v10h-2z" /></Svg></RailItem>
          <RailItem><Svg w={16} h={15}><path d="M.5.5h15v14H.5zM.5 4h15M.5 7.500h15M.5 11h15M5.500 4v10.500M10.500 4v10.500" /></Svg></RailItem>
          <RailItem><Svg w={18} h={18}><path d="M.5 6h7v6.500h-7zM.5 9h7M10.500.5h7V7h-7zM10.500 3.500h7M10.500 11h7v6.500h-7zM10.500 14h7M4 6V3h6.500M4 12.500V15h6.500" /></Svg></RailItem>
          <RailItem><Svg w={18} h={18}><path d="M4.500 9.500V1.500H10l4 4V13M10 1.500v4h4M15.500 7.500v6L13 16.500" /><text x="-1" y="16.500" fontSize="7" fontWeight="700" fill={W} stroke="none" fontFamily="Open Sans" letterSpacing="-.3">DAX</text></Svg></RailItem>
        </Rail>
        <Center>
          <InfoBar>
            <Svg w={12} h={12} s="#fff" sw={1.2}><circle cx="6" cy="6" r="5.400" /><path d="M6 5v4M6 2.800v1.200" /></Svg>
            <span>Auto recovery contains some recovered files that haven't been opened.</span>
            <InfoButton>View recovered files</InfoButton>
            <Svg w={10} h={10} s="#fff" sw={1.1}><path d="M.8.800l8 8M8.800.800l-8 8" /></Svg>
          </InfoBar>
          <Work>
            <Canvas>
              <RegionCard $x={0} $y={4} $w={192.5} $h={210}>
                <RegionTitle $size={13} $lh={19} $sp={0.95}>{"REGION BY TOTAL\nSALES"}</RegionTitle>
                <RegionTable>
                  <RCell $head>Region<Svg w={12} h={6} s="none"><path d="M0 0h11L5.500 5.500z" fill="#0f1a86" /></Svg></RCell><RCell $head $r>Sum of Sales</RCell>
                  {regions.map(([a, b], i) => (
                    <React.Fragment key={a}><RCell $last={i === 4}>{a}</RCell><RCell $r $last={i === 4}>{b}</RCell></React.Fragment>
                  ))}
                </RegionTable>
              </RegionCard>
              <ProductCard $x={209} $y={4} $w={189.5} $h={263}>
                <ProductTitle $size={15} $lh={22} $sp={0.85}>{"TOTAL SALES BY\nPRODUCT"}</ProductTitle>
                <ProductTable>
                  <PCell $k="head">Product</PCell><PCell $k="head" $n>Sum of Sales</PCell>
                  {products.map(([a, b]) => (
                    <React.Fragment key={a}><PCell>{a}</PCell><PCell $n>{b}</PCell></React.Fragment>
                  ))}
                  <PCell $k="total">Total</PCell><PCell $k="total" $n>2,101,090</PCell>
                </ProductTable>
              </ProductCard>
              <PieCard $x={429} $y={3} $w={242} $h={226}>
                <PieTitle $size={14} $lh={22} $sp={0.4}>{"Sum of Sales by Region and\nCustomer Id"}</PieTitle>
                <PieBody>
                  <svg width="178" height="176" viewBox="0 0 178 176">
                    <defs>
                      {slices.map(([, , c, id]) => (
                        <radialGradient key={id} id={id} gradientUnits="userSpaceOnUse" cx={PCX} cy={PCY} r={PR}>
                          <stop offset=".04" stopColor="#fff" /><stop offset="1" stopColor={c} />
                        </radialGradient>
                      ))}
                    </defs>
                    {slices.map(([a, b, , id]) => <path key={id} d={slice(a, b)} fill={`url(#${id})`} />)}
                    <g fill="none" stroke="#fff" strokeOpacity=".16" strokeWidth=".7">
                      {Array.from({ length: 26 }, (_, i) => <circle key={i} cx={PCX} cy={PCY} r={4 + i * 2.05} />)}
                    </g>
                    <path d="M90.500 29v-6.500H98M83 149.500h7.500V144" fill="none" stroke="#b0b0b0" />
                    <g fontFamily="Liberation Serif" fontWeight="700" fontSize="11.500" fill="#000" letterSpacing="-.05">
                      <text x="100" y="27.500" textLength="66">1,870 (0.18%)</text><text x="23.500" y="153.500" textLength="57">980 (0.09%)</text>
                    </g>
                  </svg>
                  <Legend>
                    <li>Region</li>
                    <li><Dot $c="#a83740" />South</li>
                    <li><Dot $c="#1a8cff" />East</li>
                    <li><Dot $c="#12239e" />North</li>
                    <li><Dot $c="#f2b3b8" />West</li>
                  </Legend>
                </PieBody>
              </PieCard>
              <PageEdge />
            </Canvas>
            <Filters>
              <FilterSearchRow><FilterSearch><LensR />Search</FilterSearch></FilterSearchRow>
              <FilterHead>Filters on this page<Dots>...</Dots></FilterHead>
              <DropBox>Add data fields here</DropBox>
              <FilterHead>Filters on all pages<Dots>...</Dots></FilterHead>
              <DropBox>Add data fields here</DropBox>
            </Filters>
          </Work>
          <Tabs>
            <ViewButton $on><Svg w={17} h={17} s="#fff" sw={1.3}><rect x="1" y="1" width="15" height="12" rx="2" /><path d="M3.500 16h10M6 13.500v2M11 13.500v2" /></Svg></ViewButton>
            <ViewButton><Svg w={11} h={19} s="#fff" sw={1.5}><rect x=".8" y=".8" width="9.400" height="16.500" rx="1.500" /><path d="M3.500 14.500h4" /></Svg></ViewButton>
            <Arrows><Svg w={6} h={10}><path d="M5.500 1.500v7L1 5z" /></Svg><Svg w={6} h={10}><path d="M.5 1.500v7L5 5z" /></Svg></Arrows>
            <Tab $on>Page 1<TabClose>x</TabClose></Tab><Tab>Page 2</Tab><Tab $w={77}>Page 3</Tab>
            <AddTab><Svg w={11} h={11} s="#222" sw={2.6}><path d="M5.500 0v11M0 5.500h11" /></Svg></AddTab>
          </Tabs>
        </Center>
        <VizPane>
          <PaneTitle>Visualizations<DoubleChevron /></PaneTitle>
          <BuildLabel>Build visual</BuildLabel>
          <BuildTabs>
            <div><Svg w={24} h={24}><path d="M.5 1h18" stroke="#a19f9d" strokeWidth="1.200" /><path d="M.5 5.500h23v7H.5zM.5 16.500h23v7H.5z" fill="#2aac94" strokeDasharray="2 1" /></Svg></div>
            <div><Svg w={24} h={24} sw={1.2}><path d="M16 8.500l-5-7H.8v22H8M11 1v7.500h6z" /><path d="M11 1v7.500h6z" fill={W} /><path d="M13 17l10-8.500L15.500 19c0 3-3 4.500-7 4.500 2-1 1-5 4.500-6.500zM13 17l2.500 2" fill="#141414" /></Svg></div>
          </BuildTabs>
          <Notch><Svg w={180} h={13} s="#797775"><path d="M0 12.500h16l8-8 8 8h148" /></Svg></Notch>
          <IconGrid>{viz.map((v, i) => <Svg key={i} w={18} h={18}>{v}</Svg>)}</IconGrid>
          <WellLabel $h={31} $drop={5}>Values</WellLabel>
          <Well $h={28}>Add data fields here</Well>
          <WellLabel $h={36} $drop={2} $b>Drill through</WellLabel>
          <WellLabel $h={15}>Cross-report<Toggle>Off</Toggle></WellLabel>
          <WellLabel $h={38} $drop={1}>Keep all filters<Toggle>Off</Toggle></WellLabel>
          <Well $h={26} $dark>Add drill-through fields here</Well>
        </VizPane>
        <DataPane>
          <PaneTitle>Data<DoubleChevron /></PaneTitle>
          <DataSearch><LensR n={14} s="#a8a8a8" />Search</DataSearch>
          <TableRow><Svg w={9} h={6}><path d="M.5.800l4 4 4-4" /></Svg><Svg w={12} h={12}><rect x=".5" y=".5" width="11" height="11" rx="1" /><path d="M.5 4h11M.5 8h11M4 .5v11M8 .5v11" /></Svg>SALESDATA</TableRow>
          {fields.map(([name, icon, open]) => (
            <FieldRow key={name}><i>{open && <Svg w={5} h={9}><path d="M.5.500l4 4-4 4" /></Svg>}</i><em /><u>{icon}</u>{name}</FieldRow>
          ))}
        </DataPane>
      </Body>

      <Status>
        Page 1 of 3
        <Svg w={124} h={14} s="#d0d0d0"><path d="M1 7.500h5" strokeWidth="1.500" /><path d="M10 7.500h100M60.500 5v5" /><rect x="36" y="2" width="4" height="11" fill="#e1dfdd" stroke="none" /><path d="M116 7.500h8M120 3.500v8" strokeWidth="1.300" /></Svg>
        <b>59%</b>
        <Svg w={15} h={11}><rect x=".5" y=".5" width="13.500" height="9.500" rx="1.500" /><path d="M5 3H3v5h2M9.500 3h2v5h-2" strokeDasharray="2 1" /></Svg>
      </Status>

      <TaskBar>
        <Apps>
          <AppSlot><div><Svg w={24} h={24} s="none"><path d="M0 0h11.300v11.300H0zM12.700 0H24v11.300H12.700zM0 12.700h11.300V24H0zM12.700 12.700H24V24H12.700z" fill="#1183da" /></Svg></div></AppSlot>
          <AppSlot><div><Svg w={24} h={24} s="#222" sw={2}><circle cx="14" cy="10" r="8" fill="#e8ecf8" /><path d="M8.500 16L2 22.500" strokeWidth="2.600" /></Svg></div></AppSlot>
          <AppSlot><div><Svg w={24} h={24} s="none"><path d="M0 0h24v24H0z" fill="#1c1c1c" /><path d="M2 2h9v20H2z" fill="#f3f3f3" /><path d="M13 2h9v9h-9z" fill="#2ea3e6" /><path d="M13 13h9v9h-9z" fill="#f3f3f3" /></Svg></div></AppSlot>
          <AppSlot><div>
            <svg width="24" height="24" viewBox="0 0 24 24">
              <defs><linearGradient id="edA" x1="0" y1="0" x2="1" y2=".3"><stop offset="0" stopColor="#2aa7e8" /><stop offset="1" stopColor="#5bd66b" /></linearGradient><linearGradient id="edB" x1="0" y1="0" x2="1" y2="1"><stop offset="0" stopColor="#1a8fe0" /><stop offset="1" stopColor="#0b4a9c" /></linearGradient></defs>
              <circle cx="12" cy="12" r="12" fill="url(#edB)" />
              <path d="M.3 10C1.500 4 6 0 12 0c7 0 12 5 12 10 0 4-3 6-6 6-2 0-4-.5-4-1.500s1-1.500 1-3.500c0-2.500-2.500-4.500-6-4.500C5 6.500 1.500 8 .3 10z" fill="url(#edA)" />
              <path d="M10.500 9c-2 2.500-2 7 1 9.500 3 2.300 7 2 10 .5-2-.3-5.500-.5-8-3-1.800-1.800-1-3 0-4 .5-1.500-1-3-3-3z" fill="#d9ecfa" />
            </svg>
          </div></AppSlot>
          <AppSlot><div><Svg w={26} h={22} s="none"><path d="M1 2q0-2 2-2h6l3 3h11q2 0 2 2v5H1z" fill="#e59a1a" /><rect x="1" y="5" width="24" height="16" rx="1.500" fill="#fcc94b" /><path d="M6 21v-4q0-2 2-2h10q2 0 2 2v4z" fill="#1f86d8" /><path d="M9.500 18h7v1.500h-7z" fill="#f3f7fb" /></Svg></div></AppSlot>
          <AppSlot><div><Svg w={24} h={24} s="#fff" sw={1.8}><circle cx="12" cy="12" r="12" fill="#f0402b" stroke="none" /><path d="M4.500 8.500h2.500l2.500 7.500 3-7 3 7 3-7.500H14" /></Svg></div></AppSlot>
          <AppSlot><div><Svg w={24} h={24} s="none"><path d="M8 5V2q0-1.500 1.500-1.500h5Q16 .5 16 2v3" stroke="#1c79c4" strokeWidth="1.600" /><path d="M0 5h24v16q0 3-3 3H3q-3 0-3-3z" fill="#155a9f" /><path d="M6 9h5.500v5H6z" fill="#f25022" /><path d="M12.500 9H18v5h-5.500z" fill="#7fba00" /><path d="M6 15h5.500v5H6z" fill="#00a4ef" /><path d="M12.500 15H18v5h-5.500z" fill="#ffb900" /></Svg></div></AppSlot>
          <AppSlot $on><div><Svg w={22} h={25} s="none"><rect x="11" y="0" width="9" height="24" rx="1.200" fill="#e0a817" /><rect x="6" y="6" width="9" height="18" rx="1.200" fill="#efc42d" /><rect x="1" y="12" width="9" height="12" rx="1.200" fill="#f9dc5c" /></Svg></div></AppSlot>
        </Apps>
        <Tray>
          <Svg w={13} h={8} s="#111" sw={1.2}><path d="M.8 7l5.700-6 5.700 6" /></Svg>
          <Svg w={17} h={13} s="#222" sw={1.2}><path d="M4 11.500a3.500 3.500 0 0 1 0-6.500c1-4 7-5 9 0 4 .5 4 6 0 6.500z" fill="#b9bcc2" /><path d="M1.500.500l14 12" strokeWidth="1.500" /></Svg>
          <Svg w={16} h={10} s="#111" sw={1.2}><path d="M.8.800h13v8.400h-13zM15 3.500v3" /><path d="M2.500 2.500h3v5h-3z" fill="#111" stroke="none" /></Svg>
          <Svg w={17} h={14} s="#111"><path d="M.5 5v4.500h2.500l3.500 3V1.500L3 5zM9 5c1 1.500 1 3 0 4.500M11.500 3c2 2.500 2 6 0 8.500M14 1.500c2.500 3.500 2.500 8 0 11.500" /></Svg>
          <TrayText $w={26} $lh={17}>ENG<br />UK</TrayText>
          <TrayText $w={67} $lh={16}>00:47<br />Tuesday<br />12/11/2024</TrayText>
        </Tray>
        <Notice>
          <Svg w={16} h={16} s="none"><path d="M0 0h16v12H7l-4 4v-4H0z" fill="#000" /><path d="M3 3.500h10M3 6h10M3 8.500h6" stroke="#e6ecf5" strokeWidth="1" /></Svg>
          <Badge>3</Badge>
        </Notice>
        <ShowDesktop />
      </TaskBar>
      <Watermark>Activate Windows<small>Go to Settings to activate Windows.</small></Watermark>
    </App_>
  );
}
